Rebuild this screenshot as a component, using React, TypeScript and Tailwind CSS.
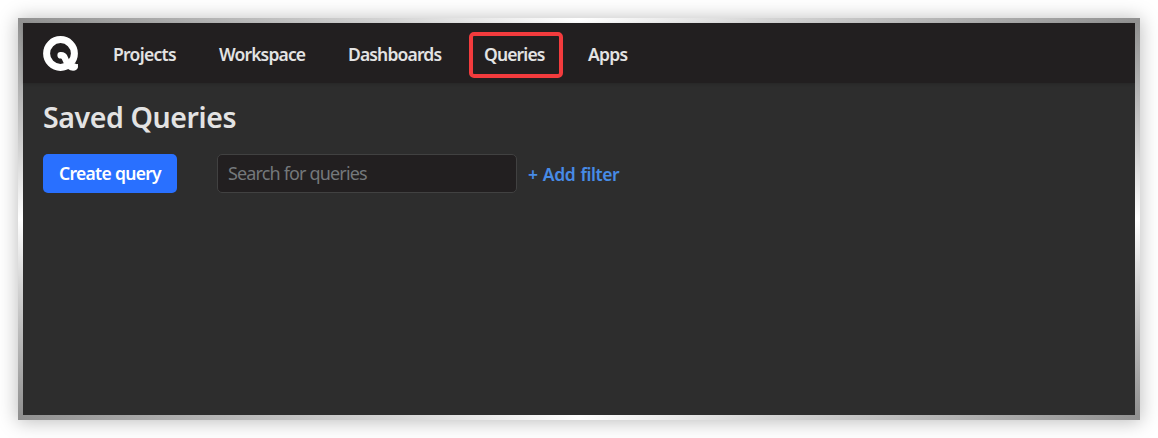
const links = [
  { label: "Projects", cls: "ml-[34px] w-[64px] tracking-[-0.7px]" },
  { label: "Workspace", cls: "ml-[42px] w-[88px] tracking-[-0.85px]" },
  { label: "Dashboards", cls: "ml-[41px] w-[95px] tracking-[-0.85px]" },
];

function Logo() {
  return (
    <svg className="mt-0.5 h-9 w-9 shrink-0" viewBox="0 0 36 36" fill="none" aria-label="Home">
      <circle cx="17.5" cy="17.5" r="13.9" stroke="white" strokeWidth="7" />
      <path
        d="M17.6 19.3C20 19.2 21.3 20.5 22 22.3C23.4 25.8 25.2 30 28.5 31.3C30 31.8 31 31.5 31.6 31"
        stroke="white"
        strokeWidth="6.4"
        strokeLinecap="round"
      />
      <path d="M31 28.6L35 28L34.8 31.6Z" fill="white" />
    </svg>
  );
}

export default function App() {
  return (
    <div className="h-[438px] w-[1158px] overflow-hidden bg-white p-[18px] font-['Noto_Sans','Open_Sans',sans-serif]">
      <div className="grid h-[402px] w-[1122px] grid-cols-[5px_1112px_5px] grid-rows-[5px_392px_5px] shadow-[0_1px_18px_1px_rgba(0,0,0,0.26)]">
        <div className="col-span-3 bg-[linear-gradient(90deg,#919191_0%,#d4d4d4_33%,#ffffff_50%,#d4d4d4_67%,#919191_100%)]" />
        <div className="bg-[linear-gradient(180deg,#919191_0%,#d4d4d4_33%,#ffffff_50%,#d4d4d4_67%,#919191_100%)]" />
        <main className="flex flex-col bg-[#2d2d2d]">
          <nav className="flex h-[60px] shrink-0 items-center bg-[#221f20] pl-5 text-[17.5px] font-semibold text-[#e3e3e3] shadow-[0_1px_3px_rgba(0,0,0,0.15)]">
            <Logo />
            {links.map((l) => (
              <a key={l.label} className={"whitespace-nowrap pt-[3px] " + l.cls}>{l.label}</a>
            ))}
            <a className="mt-[3px] ml-[26px] flex h-[46px] w-[94px] items-center rounded-[5px] border-4 border-[#f33b3d] pl-[11px] tracking-[-0.85px]">Queries</a>
            <a className="ml-[25px] pt-[3px] tracking-[-0.7px]">Apps</a>
          </nav>
          <h1 className="ml-5 mt-[14px] h-10 whitespace-nowrap text-[28.5px] font-semibold leading-10 tracking-[-0.4px] text-[#e3e3e3]">Saved Queries</h1>
          <div className="ml-5 mt-[17px] flex h-[39px] items-center">
            <button className="h-[39px] w-[134px] whitespace-nowrap rounded-[5px] bg-[#2970ff] text-[17.5px] font-semibold tracking-[-0.7px] text-white">Create query</button>
            <input
              className="ml-10 h-[39px] w-[300px] rounded-[5px] border border-[#414141] bg-[#221f20] px-[10px] pb-px text-[18px] tracking-[-0.85px] text-[#e3e3e3] placeholder:text-[#74787b]"
              placeholder="Search for queries"
            />
            <a className="ml-[11px] whitespace-nowrap pt-0.5 text-[17.5px] font-semibold tracking-[-0.45px] text-[#478be6] [word-spacing:1.2px]">+ Add filter</a>
          </div>
        </main>
        <div className="bg-[linear-gradient(180deg,#919191_0%,#d4d4d4_33%,#ffffff_50%,#d4d4d4_67%,#919191_100%)]" />
        <div className="col-span-3 bg-[linear-gradient(90deg,#919191_0%,#d4d4d4_33%,#ffffff_50%,#d4d4d4_67%,#919191_100%)]" />
      </div>
    </div>
  );
}
